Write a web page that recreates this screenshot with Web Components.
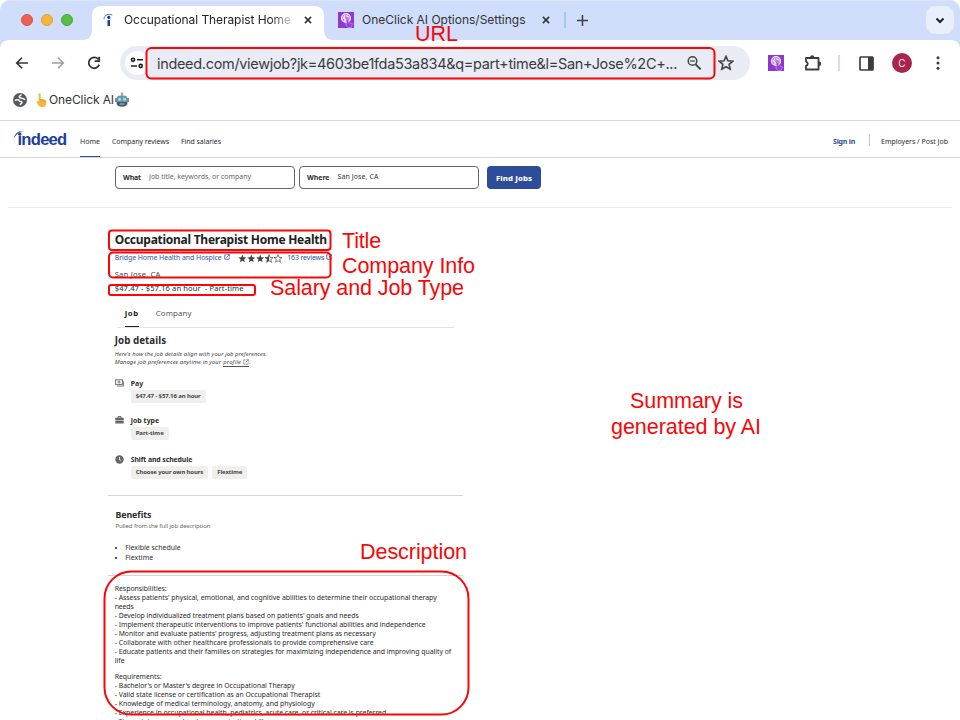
<!DOCTYPE html>
<html lang="en"><head><meta charset="utf-8"><title>Occupational Therapist Home Health</title>
<style>
html,body{margin:0;width:960px;height:720px;overflow:hidden;background:#fff}
body{position:relative;font-family:"Noto Sans",sans-serif;color:#2d2d2d}
</style></head><body>
<browser-chrome></browser-chrome>
<site-header></site-header>
<search-bar></search-bar>
<job-posting></job-posting>
<note-layer></note-layer>
<script>
const define=(name,html,setup)=>{
  const t=document.createElement('template');t.innerHTML=html;
  customElements.define(name,class extends HTMLElement{
    connectedCallback(){
      if(this.shadowRoot)return;
      this.attachShadow({mode:'open'}).append(t.content.cloneNode(true));
      if(setup)setup(this,this.shadowRoot);
    }});
};

define('browser-chrome',`<style>
:host{display:block;height:120px;border-bottom:1px solid #dadada;font-family:Inter,Roboto,sans-serif;color:#333;background:#fff}
svg{display:block;flex:none}
.strip{height:40px;display:flex;align-items:center;background:#d0ddfb;border-radius:10px 10px 0 0;box-shadow:inset 0 1px #dde6f7;box-sizing:border-box;padding:0 6px 0 21px}
.lights{display:flex;gap:8px;width:71px}
.lights i{width:12px;height:12px;box-sizing:border-box;border-radius:50%;background:#ed6155;border:1px solid #d6524a}
.lights i:nth-child(2){background:#f4b63d;border-color:#dca135}.lights i:nth-child(3){background:#57bf46;border-color:#48a83a}
.plus{margin-left:11px}
.sep{width:2px;height:16px;background:#a8c4fa;margin-left:12px}
.drop{margin-left:auto;width:28px;height:28px;border-radius:9px;background:#e9effd;display:grid;place-items:center}
.bar{display:flex;align-items:center;padding:6px 14px 0 15px;height:34px;position:relative;background:#fff}
.bar:before,.bar:after{content:"";position:absolute;top:0;width:8px;height:8px;z-index:1;background:radial-gradient(circle at 100% 100%,#fff 7.5px,#d0ddfb 8px)}
.bar:before{left:0}.bar:after{right:0;transform:scaleX(-1)}
.omni{margin-left:19px;width:630px;height:34px;border-radius:17px;background:#e9ebf5;display:flex;align-items:center;box-sizing:border-box;padding-left:5px;font-size:14.5px;color:#3a3b3e;flex:none}
.info{width:24px;height:24px;border-radius:50%;background:#fff;display:grid;place-items:center;margin-right:8px}
.av{width:20px;height:20px;border-radius:50%;background:#a8254f;color:#eed;font-size:10px;line-height:20px;text-align:center;margin-left:18px}
.marks{height:40px;display:flex;align-items:center;padding-left:13px;font-size:12px}
</style>
<div class="strip"><div class="lights"><i></i><i></i><i></i></div>
<browser-tab active><svg slot="icon" width="14" height="14" viewBox="0 0 14 14"><circle cx="7.8" cy="4.4" r="1.6" fill="#163d99"/><path d="M7.8 7v6" stroke="#163d99" stroke-width="2.5"/><path d="M3 6.2C3 2 7 .2 11.3 2" fill="none" stroke="#4973bd" stroke-width="1"/></svg><fit-text w="167">Occupational Therapist Home</fit-text></browser-tab>
<browser-tab><ext-icon slot="icon"></ext-icon><fit-text w="163.5">OneClick AI Options/Settings</fit-text></browser-tab>
<div class="sep"></div>
<svg class="plus" width="11" height="11" viewBox="0 0 11 11"><path d="M5.5 0v11M0 5.5h11" stroke="#3c4043" stroke-width="1.5"/></svg>
<div class="drop"><svg width="10" height="7" viewBox="0 0 10 7"><path d="M1.5 1.5 5 5l3.5-3.5" fill="none" stroke="#1f1f1f" stroke-width="2"/></svg></div></div>
<div class="bar">
<svg width="14" height="14" viewBox="0 0 14 14" fill="none" stroke="#333" stroke-width="1.6"><path d="M13 7H2M7 1.7 1.7 7 7 12.3"/></svg>
<svg style="margin-left:22px" width="14" height="14" viewBox="0 0 14 14" fill="none" stroke="#a0a0a0" stroke-width="1.6"><path d="M1 7h11M7 1.7 12.3 7 7 12.3"/></svg>
<svg style="margin-left:22px" width="14" height="14" viewBox="0 0 14 14" fill="none" stroke="#333" stroke-width="1.8"><path d="M11.1 3.2A5.4 5.4 0 1 0 12.2 8.6M12.2.8v4.4H7.6"/></svg>
<div class="omni"><div class="info"><svg width="14" height="12" viewBox="0 0 14 12" fill="none" stroke="#222" stroke-width="1.6"><circle cx="3" cy="2.8" r="1.6"/><path d="M7 2.8h6M1 9h6"/><circle cx="10.7" cy="9" r="1.6"/></svg></div>
<fit-text w="520">indeed.com/viewjob?jk=4603be1fda53a834&amp;q=part+time&amp;l=San+Jose%2C+...</fit-text>
<svg style="margin-left:9px" width="16" height="16" viewBox="0 0 16 16" fill="none" stroke="#444" stroke-width="1.5"><circle cx="6.5" cy="6" r="4.3"/><path d="M4 6h5" stroke-width="1.2"/><path d="m9.7 9.3 5 5" stroke-width="1.9"/></svg>
<svg style="margin-left:16px" width="16" height="16" viewBox="0 0 16 16" fill="none" stroke="#444" stroke-width="1.6"><path d="m8 1.4 1.9 4.4 4.9.4-3.7 3.2 1.1 4.8L8 11.7 3.8 14.2l1.1-4.8L1.2 6.2l4.9-.4Z"/></svg></div>
<ext-icon style="margin-left:18px"></ext-icon>
<svg style="margin-left:20px" width="18" height="18" viewBox="0 0 18 18"><path d="M2 4h12.5v11.5H2v-3.6a2.2 2.2 0 0 0 0-4.3Z" fill="none" stroke="#3c3c3c" stroke-width="1.8" stroke-linejoin="round"/><path d="M6 3.5a2.2 2.2 0 0 1 4.4 0ZM15 7.5a2.2 2.2 0 0 1 0 4.4Z" fill="#3c3c3c"/></svg>
<div style="width:2px;height:16px;background:#d0ddfb;margin-left:16px"></div>
<svg style="margin-left:19px" width="15" height="15" viewBox="0 0 15 15"><rect x="1" y="1" width="13" height="13" fill="none" stroke="#3c3c3c" stroke-width="1.7" rx=".8"/><path d="M9 1h5v13H9z" fill="#3c3c3c"/></svg>
<div class="av">C</div>
<svg style="margin-left:24px" width="4" height="14" viewBox="0 0 4 14" fill="#3c3c3c"><circle cx="2" cy="1.7" r="1.5"/><circle cx="2" cy="7" r="1.5"/><circle cx="2" cy="12.3" r="1.5"/></svg>
</div>
<div class="marks"><svg width="14" height="14" viewBox="0 0 14 14"><circle cx="7" cy="7" r="7" fill="#56585c"/><path d="M1.8 7.2 4.6 6.6q1.7 0 2 1.8h1.9q.9 1.6-.6 2.5l-1.2.9M8.5 1.6 6.3 3.2l.5 1.6 2.6.5 2.8 1.4" fill="none" stroke="#fff" stroke-width="1.4"/></svg>
<svg style="margin-left:9px" width="12" height="15" viewBox="0 0 13 16"><path d="M2.8 1.4c0-1.5 2.3-1.5 2.3 0v5q5.2 0 6 2.5c.6 4-.8 6-3.6 6.3-3.7.1-5.4-1.5-6.7-5.2-.5-1.7.9-2.1 2-.8Z" fill="#f5b741"/><path d="M5.2 6.4v3M7.4 7v2.6M9.5 7.7v2" stroke="#cf862b" stroke-width=".7"/></svg>
<fit-text w="65" style="margin:-1px 0 0 1px">OneClick AI</fit-text>
<svg style="margin:-2px 0 0 1px" width="14" height="15" viewBox="0 0 14 15"><circle cx="7" cy="1.6" r="1.3" fill="#e0a24a"/><path d="M6.5 2h1v3h-1z" fill="#687e86"/><path d="M0 6h2v4H0zM12 6h2v4h-2z" fill="#d46448"/><rect x="1.4" y="3.5" width="11.2" height="11" rx="3.8" fill="#6899a8"/><path d="M2 10h10v1.5q-.5 3-5 3t-5-3Z" fill="#3c5965"/><circle cx="4.5" cy="7.3" r="1.5" fill="#8ee8f1"/><circle cx="9.5" cy="7.3" r="1.5" fill="#8ee8f1"/><path d="M4.5 12h5" stroke="#bad5db"/><path d="m6.2 9.8.8-1.3.8 1.3z" fill="#df6549"/></svg></div>`);

define('browser-tab',`<style>
:host{display:flex;align-items:center;height:40px;position:relative;box-sizing:border-box;padding-left:14px;font-size:12px;width:228px;flex:none;color:#333}
:host([active]){width:232px;padding:0 11px 0 9px;color:#222}
.shape{display:none}:host([active]) .shape{display:block;position:absolute;left:-10px;top:0}
.icon{position:relative;width:16px;margin-right:8px;display:flex}
.t{position:relative;width:176px;overflow:hidden;display:flex;margin-top:-1px}
:host([active]) .icon{margin-right:7px}
:host([active]) .t{width:168px;-webkit-mask:linear-gradient(90deg,#000 146px,#0003 167px)}
.x{position:relative;margin-left:12px}:host(:not([active])) .x{margin-left:4px}
</style><svg class="shape" width="252" height="40"><path d="M0 40q10 0 10-10V16q0-10 10-10h212q10 0 10 10v14q0 10 10 10Z" fill="#fff"/></svg><span class="icon"><slot name="icon"></slot></span><span class="t"><slot></slot></span><svg class="x" width="8" height="8" viewBox="0 0 9 9"><path d="m1 1 7 7M8 1 1 8" stroke="#333" stroke-width="1.7"/></svg>`);

define('ext-icon',`<style>:host{display:block;flex:none;width:16px;height:16px}svg{display:block}</style><svg width="16" height="16" viewBox="0 0 16 16"><path fill="#8f37d2" d="M0 0h16v16H0z"/><circle cx="8" cy="6" r="4.4" fill="#b77ae6" stroke="#f6e9ff" stroke-width="1.4"/><path d="M7 3.4 5.6 5.8 7 7v3M8.5 3.5l2 1.8" stroke="#fff" stroke-width="1.2" fill="none"/><path d="M8.7 8v4.2l-1.4-.5 2.4 3.8h3.6l1.1-3.7-3.9-1.3V8q-.9-1-1.8 0Z" fill="#9440d4" stroke="#c99aec" stroke-width=".6"/></svg>`);

define('site-header',`<style>
:host{display:flex;align-items:center;height:36px;border-bottom:1px solid #d8d8d8;font-size:7px;padding:0 12px 0 14px;background:#fff}
.logo{position:relative;width:53px;height:16px;display:flex;font:bold 16.6px/16px "Liberation Sans",sans-serif;color:#1c3f9b;padding-left:3.5px;box-sizing:border-box;margin:2px 13px 0 0}
.logo svg{position:absolute;left:-1px;top:-1px}
.home{display:flex;align-items:center;box-sizing:border-box;border-bottom:1px solid #2d4c9a;padding:5px 0 0;margin:0 12px 0 0;height:36px}
fit-text{padding-top:4px}.home fit-text,.logo fit-text{padding-top:0}
.sign{margin-left:auto;font-weight:700;color:#2b4a9a}
.sep{width:1px;height:12px;background:#c8c8c8;margin:2px 11px 0 14px}
</style><div class="logo"><fit-text w="49">indeed</fit-text><svg width="16" height="10" viewBox="0 0 16 10"><path d="M.8 7.5C2 1.5 6.5-.7 11.3 1.3 7 .3 3.5 2.4.8 7.5Z" fill="#1c3f9b"/><circle cx="6.8" cy="3.2" r="1.5" fill="#1c3f9b"/></svg></div>
<div class="home"><fit-text w="20">Home</fit-text></div><fit-text w="57">Company reviews</fit-text><fit-text w="40" style="margin-left:12px">Find salaries</fit-text>
<fit-text class="sign" w="22">Sign in</fit-text><div class="sep"></div><fit-text w="67">Employers / Post Job</fit-text>`);

define('search-bar',`<style>
:host{display:flex;gap:4px;height:50px;box-sizing:border-box;margin:0 8px;border-bottom:1px solid #ececec;padding:8px 0 0 107px;font-size:7px}
.f{width:180px;height:23px;box-sizing:border-box;border:1px solid #666;border-radius:4px;display:flex;align-items:center;padding-left:7px;gap:8px}
b{display:flex}.f span{display:flex;color:#666;padding-bottom:2px}
.go{margin-left:4px;width:54px;height:23px;border-radius:4px;background:#2d4c9a;color:#fff;font-weight:800;font-size:7.8px;display:flex;align-items:center;justify-content:center;box-sizing:border-box}
</style><div class="f"><b><fit-text w="18">What</fit-text></b><span><fit-text w="102">Job title, keywords, or company</fit-text></span></div>
<div class="f"><b><fit-text w="22.5">Where</fit-text></b><span style="color:#333"><fit-text w="41">San Jose, CA</fit-text></span></div><div class="go"><fit-text w="36">Find Jobs</fit-text></div>`);

const linkIcon='<svg width="6" height="6" viewBox="0 0 6 6" fill="none" stroke="currentColor" stroke-width=".8"><path d="M2.5.8H.8v4.4h4.4V3.5M3.4.6h2v2M5.3.7 2.7 3.3"/></svg>';
const desc=[['Responsibilities:',52],['- Assess patients\' physical, emotional, and cognitive abilities to determine their occupational therapy',322],['needs',19],['- Develop individualized treatment plans based on patients\' goals and needs',244],['- Implement therapeutic interventions to improve patients\' functional abilities and independence',311],['- Monitor and evaluate patients\' progress, adjusting treatment plans as necessary',261],['- Collaborate with other healthcare professionals to provide comprehensive care',259],['- Educate patients and their families on strategies for maximizing independence and improving quality of',336.5],['life',10],0,['Requirements:',47],['- Bachelor\'s or Master\'s degree in Occupational Therapy',180],['- Valid state license or certification as an Occupational Therapist',205.5],['- Knowledge of medical terminology, anatomy, and physiology',200],['- Experience in occupational health, pediatrics, acute care, or critical care is preferred',271.5],['- Strong interpersonal and communication skills',152]];
define('job-posting',`<style>
:host{display:block;padding:22px 0 0 114.7px;width:845px;font-size:7px}
svg{display:block;flex:none}
h1,h2,p,ul{margin:0}
h1{font-size:12px;line-height:20px;height:20px;display:flex;color:#222}
.r{display:flex;align-items:center;height:12px;white-space:nowrap}
.co{margin-top:1px;color:#35519d}.stars{margin:2px 5px 0 8.5px}
.tabs{display:flex;margin:5px 0 0 2px;width:337px;box-sizing:border-box;height:29px;border-bottom:1px solid #e4e4e4;padding-left:8px;gap:17px;font-size:7.8px;color:#555}
.tabs span{height:28px;display:flex;align-items:center;box-sizing:border-box;padding-bottom:1px}
.tabs .on{font-weight:700;color:#222;border-bottom:1px solid #222;padding:0}
h2{font-size:9.8px;margin-top:6px;height:12px;display:flex;align-items:center}
.it{font-style:italic;font-size:5.8px;height:8px;color:#444}
.pr{border-bottom:1px solid #555;display:flex;align-items:center;gap:2px;width:26px;height:8px}.pr svg{opacity:.6}
hr{border:0;height:1px;background:#d5d5d5;width:355px;margin:0 0 0 -7px}
li{list-style:none;display:flex;align-items:center;height:10px;font-size:7px}
li:before{content:"";width:2px;height:2px;background:#555;margin:1px 8.5px 0 0}
.d{margin-top:8px;color:#2a2a2a;font-size:6.9px}.d div{height:9px;display:flex;align-items:center}.d .gap{height:7px}
</style>
<h1><fit-text w="212">Occupational Therapist Home Health</fit-text></h1>
<div class="r co"><fit-text w="107" style="margin-right:2px">Bridge Home Health and Hospice</fit-text>${linkIcon}
<svg class="stars" width="44" height="9" viewBox="0 0 44 9"></svg><fit-text w="37" style="margin-right:2px">163 reviews</fit-text>${linkIcon}</div>
<div class="r" style="margin-top:5px;font-size:7.6px;color:#444"><fit-text w="46">San Jose, CA</fit-text></div>
<div class="r" style="margin-top:2px;font-size:7.6px"><fit-text w="129">$47.47 - $57.16 an hour&nbsp; - Part-time</fit-text></div>
<div class="tabs"><span class="on"><fit-text w="14">Job</fit-text></span><span><fit-text w="36">Company</fit-text></span></div>
<h2><fit-text w="51.5">Job details</fit-text></h2>
<div class="r it" style="margin-top:4px"><fit-text w="152.5">Here's how the job details align with your job preferences.</fit-text></div>
<div class="r it"><fit-text w="106.5" style="margin-right:2px">Manage job preferences anytime in your</fit-text><span class="pr"><fit-text w="18">profile</fit-text>${linkIcon}</span>.</div>
<job-fact style="margin-top:11px" label="Pay" lw="12.5"><svg slot="icon" width="9" height="8" viewBox="0 0 9 8" fill="none" stroke="#666" stroke-width=".9"><rect x=".6" y=".8" width="6.8" height="4.6"/><circle cx="4" cy="3.1" r="1"/><path d="M1.8 7h6.8V2.3"/></svg><job-chip><fit-text w="65">$47.47 - $57.16 an hour</fit-text></job-chip></job-fact>
<job-fact style="margin-top:12px" label="Job type" lw="28.5"><svg slot="icon" width="9" height="8" viewBox="0 0 9 8"><path d="M3 2V.7h3V2" fill="none" stroke="#555"/><path d="M.3 1.8h8.4v2.5H.3zM.3 4.8h8.4v2.7H.3z" fill="#666"/></svg><job-chip><fit-text w="28">Part-time</fit-text></job-chip></job-fact>
<job-fact style="margin-top:14px" label="Shift and schedule" lw="61.5"><svg slot="icon" width="9" height="9" viewBox="0 0 9 9"><circle cx="4.5" cy="4.5" r="4.2" fill="#666"/><path d="M4.5 2v2.7l1.7 1" fill="none" stroke="#fff" stroke-width=".8"/></svg><job-chip><fit-text w="67.5">Choose your own hours</fit-text></job-chip><job-chip><fit-text w="25">Flextime</fit-text></job-chip></job-fact>
<hr style="margin-top:17px">
<h2 style="margin:13px 0 0 .7px;font-size:8.8px"><fit-text w="36">Benefits</fit-text></h2>
<div class="r" style="height:10px;font-size:6.1px;color:#666;padding-left:.7px;margin-top:-1px"><fit-text w="95">Pulled from the full job description</fit-text></div>
<ul style="padding:0;margin-top:12px"><li><fit-text w="55.5">Flexible schedule</fit-text></li><li><fit-text w="28">Flextime</fit-text></li></ul>
<hr style="margin-top:13px"><div class="d"></div>`,(el,root)=>{
  const star='m4.2 0 1.1 2.9 3.1.2-2.4 2 .8 3-2.6-1.7L1.6 8.1l.8-3-2.4-2 3.1-.2Z';
  root.querySelector('.stars').innerHTML=[0,1,2,3,4].map(i=>`<g transform="translate(${i*8.9+.4} .6) scale(.95)">${i<3?`<path d="${star}" fill="#444"/>`:`<path d="${star}" fill="none" stroke="#555" stroke-width=".8"/>`}${i==3?'<path d="M4.2 0v6.4L1.6 8.1l.8-3-2.4-2 3.1-.2Z" fill="#444"/>':''}</g>`).join('');
  root.querySelector('.d').innerHTML=desc.map(x=>x?`<div><fit-text w="${x[1]}">${x[0]}</fit-text></div>`:'<div class="gap"></div>').join('');
});

define('job-fact',`<style>:host{display:grid;grid-template-columns:16px auto;justify-content:start;row-gap:1px;font-size:6.9px}
.i{display:flex;align-items:center;padding-left:.4px}.l{height:12px;display:flex;align-items:center;font-weight:700}.c{grid-column:2;display:flex;gap:4px}</style>
<span class="i"><slot name="icon"></slot></span><span class="l"></span><span class="c"><slot></slot></span>`,(el,root)=>{
  root.querySelector('.l').innerHTML=`<fit-text w="${el.getAttribute('lw')}">${el.getAttribute('label')}</fit-text>`;});
define('job-chip',`<style>:host{display:flex;align-items:center;height:12.5px;margin-bottom:-.5px;padding:0 5px;border-radius:2px;background:#f0efee;font-weight:700;font-size:6px;color:#444}</style><slot></slot>`);

const notes=[['URL',415,41,43],['Title',342,248,39],['Company Info',342,273,133],['Salary and Job Type',270,295,194],['Description',360,559,107],['Summary is',630,408.5,113],['generated by AI',611,434,150]];
const boxes=[[145.5,47,570,32.5,6],[108,229.5,223.5,21.5,4],[108,251.5,223.5,27,5],[108,284,148,12,3],[103.5,570.5,366,145,28]];
define('note-layer',`<style>:host{position:absolute;inset:0;overflow:hidden;pointer-events:none}</style>
<svg width="960" height="720" fill="none" stroke="#f90606" stroke-width="2" style="display:block"></svg>
<style>fit-text{position:absolute;color:#f90606;font:21.5px/26px "Liberation Sans",sans-serif}</style>`,(el,root)=>{
  root.querySelector('svg').innerHTML=boxes.map(([x,y,w,h,r])=>`<rect x="${x+1}" y="${y+1}" width="${w-2}" height="${h-2}" rx="${r-1}"/>`).join('');
  for(const[s,x,y,w]of notes){const d=document.createElement('fit-text');d.setAttribute('w',w);d.textContent=s;d.style.cssText=`left:${x}px;top:${y-20.5}px`;root.append(d);}
});

// Spreads its line of text over the width given in "w".
define('fit-text',`<style>:host{display:block;flex:none;white-space:nowrap}</style><slot></slot>`,el=>{
  const r=document.createRange();r.selectNodeContents(el);
  const w=+el.getAttribute('w'),n=el.textContent.length,now=r.getBoundingClientRect().width;
  el.style.letterSpacing=(w-now)/n+'px';
  el.style.width=w+'px';
});
</script></body></html>
